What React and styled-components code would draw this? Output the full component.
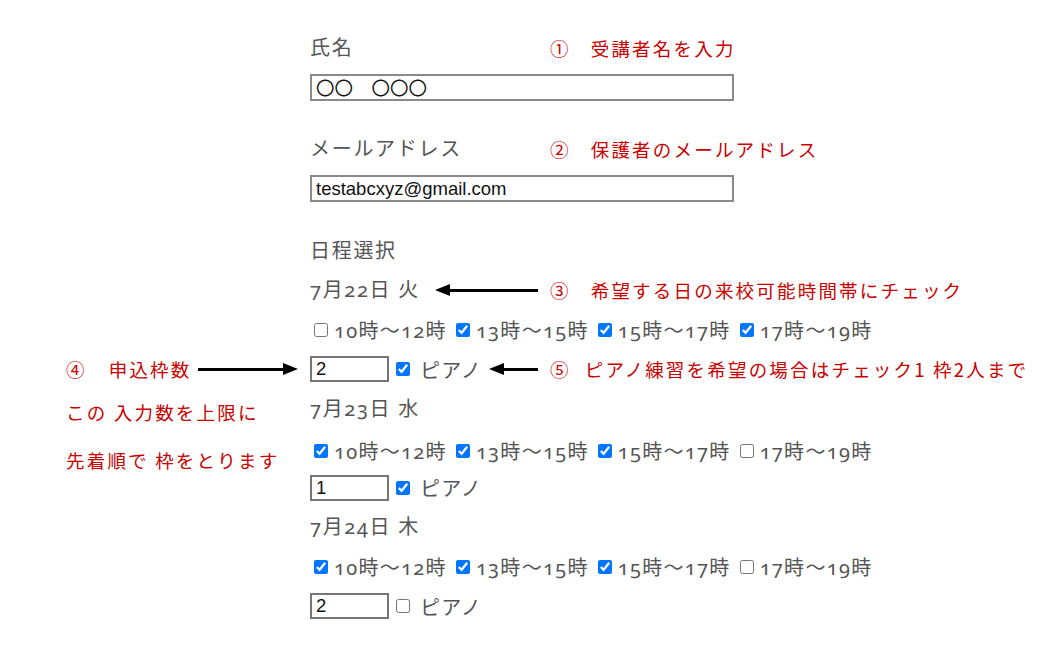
import React from 'react';
import styled, { createGlobalStyle } from 'styled-components';

const FORM_FONT = `'Noto Sans', 'Noto Sans CJK JP', sans-serif`;
const NOTE_FONT = `'Noto Sans CJK JP', sans-serif`;
const INPUT_FONT = `'Liberation Sans', Arial, 'Noto Sans CJK JP', sans-serif`;
const RED = '#c80000';

const GlobalStyle = createGlobalStyle`
  html, body {
    margin: 0;
    padding: 0;
    background: #fff;
  }
`;

const Page = styled.div`
  padding-top: 28px;
  font-family: ${FORM_FONT};
  font-variant-numeric: oldstyle-nums;
  color: #555;
`;

const Group = styled.section`
  & + & {
    margin-top: 22.5px;
  }
`;

const Row = styled.div`
  display: grid;
  grid-template-columns: 310px 1fr;
  align-items: center;
  height: 39.5px;
`;

const Side = styled.div`
  display: flex;
  align-items: center;
  padding-left: 66px;
  padding-top: ${(p) => p.$drop || 0}px;
`;

const Main = styled.div`
  display: flex;
  align-items: center;
  min-width: 0;
`;

const Lead = styled.div`
  display: flex;
  align-items: center;
  flex: 0 0 240px;
`;

const Label = styled.span`
  font-size: 20px;
  letter-spacing: 1.7px;
  line-height: 1;
  white-space: nowrap;
`;

const TextInput = styled.input`
  box-sizing: border-box;
  width: 424px;
  height: 27px;
  margin: 0;
  padding: 0 4px;
  border: 2px solid #8a8a8a;
  font-family: ${INPUT_FONT};
  font-size: 18.5px;
  color: #111;
  outline: none;
`;

const CountInput = styled(TextInput)`
  width: 79px;
  height: 26px;
  border-color: #767676;
`;

const Slot = styled.label`
  display: inline-flex;
  align-items: center;
  margin-right: 5px;
  font-size: 20px;
  letter-spacing: 1.3px;
  white-space: nowrap;
`;

const Check = styled.input.attrs({ type: 'checkbox' })`
  width: 14px;
  height: 14px;
  margin: 0 6px 0 4px;
  accent-color: #0075ff;
`;

const Note = styled.span`
  font-family: ${NOTE_FONT};
  font-variant-numeric: normal;
  font-size: 18.5px;
  letter-spacing: 2.2px;
  color: ${RED};
  white-space: nowrap;
`;

const Mark = styled.span`
  margin-right: ${(p) => p.$gap || 18}px;
`;

const Arrow = styled.span`
  position: relative;
  flex: 1;
  height: 13px;
  margin: ${(p) => p.$margin};

  &::before {
    content: '';
    position: absolute;
    top: 5px;
    left: ${(p) => (p.$dir === 'left' ? '10px' : '0')};
    right: ${(p) => (p.$dir === 'left' ? '0' : '10px')};
    height: 3px;
    background: #000;
  }

  &::after {
    content: '';
    position: absolute;
    top: 0;
    ${(p) => (p.$dir === 'left' ? 'left: 0;' : 'right: 0;')}
    border-top: 6.5px solid transparent;
    border-bottom: 6.5px solid transparent;
    ${(p) => (p.$dir === 'left'
    ? 'border-right: 15px solid #000;'
    : 'border-left: 15px solid #000;')}
  }
`;

const DAYS = [
  { date: '7月22日 火', slots: [false, true, true, true], count: '2', piano: true },
  { date: '7月23日 水', slots: [true, true, true, false], count: '1', piano: true },
  { date: '7月24日 木', slots: [true, true, true, false], count: '2', piano: false },
];

const SLOT_NAMES = ['10時〜12時', '13時〜15時', '15時〜17時', '17時〜19時'];

const SIDE_NOTES = {
  0: { count: (
    <>
      <Note><Mark $gap={22}>④</Mark>申込枠数</Note>
      <Arrow $dir="right" $margin="0 12px 0 6px" />
    </>
  ) },
  1: {
    date: <Note>この 入力数を上限に</Note>,
    slots: <Note>先着順で 枠をとります</Note>,
  },
};

const Day = ({ day, index }) => {
  const side = SIDE_NOTES[index] || {};
  const first = index === 0;
  return (
    <>
      <Row>
        <Side $drop={6}>{side.date}</Side>
        <Main>
          {first ? (
            <>
              <Lead>
                <Label>{day.date}</Label>
                <Arrow $dir="left" $margin="0 12px 0 15px" />
              </Lead>
              <Note><Mark $gap={20}>③</Mark>希望する日の来校可能時間帯にチェック</Note>
            </>
          ) : (
            <Label>{day.date}</Label>
          )}
        </Main>
      </Row>
      <Row>
        <Side $drop={18}>{side.slots}</Side>
        <Main>
          {SLOT_NAMES.map((name, i) => (
            <Slot key={name}>
              <Check defaultChecked={day.slots[i]} />
              {name}
            </Slot>
          ))}
        </Main>
      </Row>
      <Row>
        <Side>{side.count}</Side>
        <Main>
          <Lead>
            <CountInput defaultValue={day.count} />
            <Slot>
              <Check defaultChecked={day.piano} style={{ marginLeft: 7, marginRight: 10 }} />
              ピアノ
            </Slot>
            {first && <Arrow $dir="left" $margin="0 12px 0 2px" />}
          </Lead>
          {first && <Note><Mark $gap={14}>⑤</Mark>ピアノ練習を希望の場合はチェック1 枠2人まで</Note>}
        </Main>
      </Row>
    </>
  );
};

const App = () => (
  <>
    <GlobalStyle />
    <Page>
      <Group>
        <Row>
          <Side />
          <Main>
            <Lead><Label>氏名</Label></Lead>
            <Note><Mark $gap={20}>①</Mark>受講者名を入力</Note>
          </Main>
        </Row>
        <Row>
          <Side />
          <Main><TextInput defaultValue="〇〇　〇〇〇" /></Main>
        </Row>
      </Group>
      <Group>
        <Row>
          <Side />
          <Main>
            <Lead><Label>メールアドレス</Label></Lead>
            <Note><Mark $gap={20}>②</Mark>保護者のメールアドレス</Note>
          </Main>
        </Row>
        <Row>
          <Side />
          <Main><TextInput defaultValue="testabcxyz@gmail.com" /></Main>
        </Row>
      </Group>
      <Group>
        <Row>
          <Side />
          <Main><Label>日程選択</Label></Main>
        </Row>
        {DAYS.map((day, i) => <Day key={day.date} day={day} index={i} />)}
      </Group>
    </Page>
  </>
);

export default App;
